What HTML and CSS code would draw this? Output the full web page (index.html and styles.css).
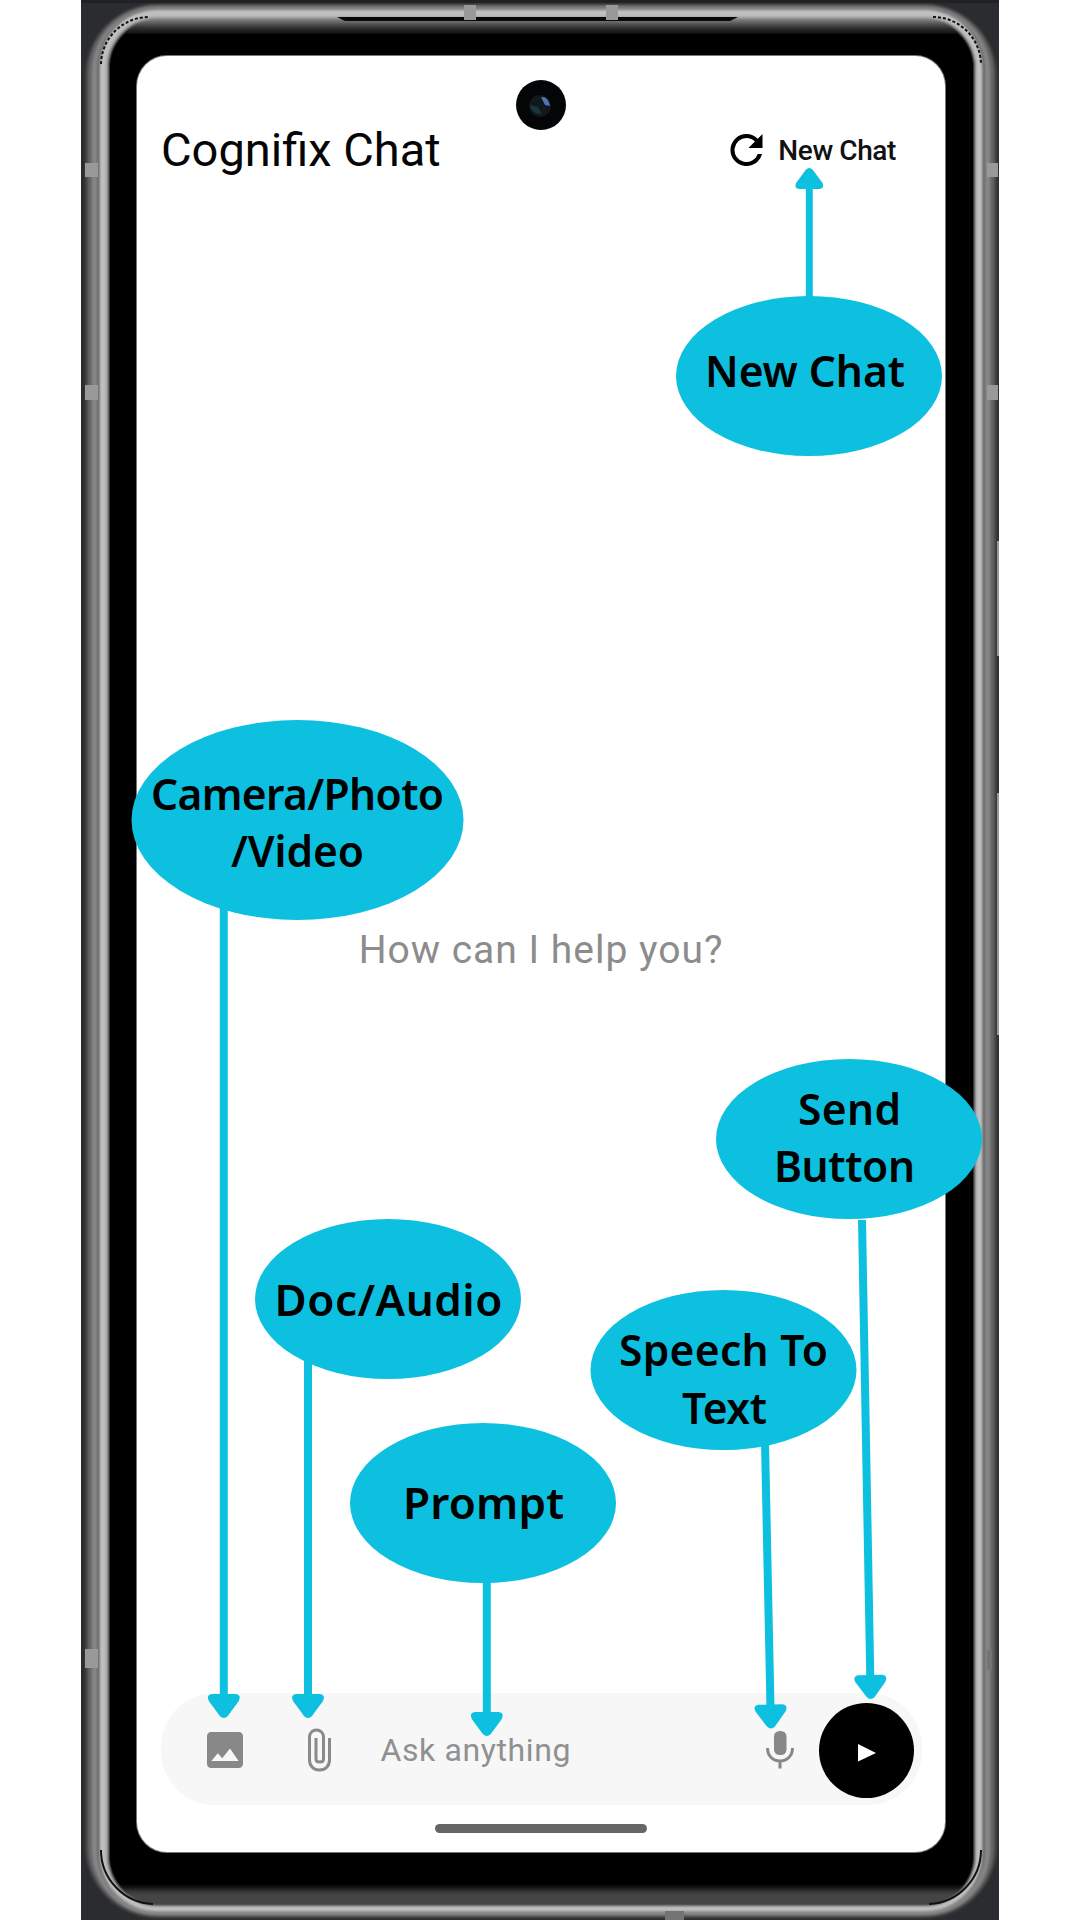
FILE: index.html
```html
<!DOCTYPE html>
<html lang="en">
<head>
<meta charset="utf-8">
<title>Cognifix Chat</title>
<link rel="stylesheet" href="styles.css">
</head>
<body>
<main class="stage">
  <svg class="frame" viewBox="0 0 918 1920" aria-hidden="true">
    <defs>
      <filter id="soft" x="-2%" y="-2%" width="104%" height="104%"><feGaussianBlur stdDeviation=".8"/></filter>
      <linearGradient id="inner" x1="0" y1="18" x2="0" y2="1907" gradientUnits="userSpaceOnUse">
        <stop offset="0" stop-color="#8c8c8c"/><stop offset=".004" stop-color="#444"/><stop offset=".009" stop-color="#000"/>
        <stop offset=".988" stop-color="#000"/><stop offset=".993" stop-color="#444"/><stop offset="1" stop-color="#444"/>
      </linearGradient>
    </defs>
    <rect width="918" height="1920" fill="#2b2c30"/>
    <rect width="918" height="3" fill="#202124"/>
    <g filter="url(#soft)">
      <rect x="4" y="4" width="912" height="1914" rx="72" fill="#444"/>
      <rect x="7" y="5" width="906" height="1911" rx="69" fill="#666"/>
      <rect x="11" y="7" width="898" height="1908" rx="65" fill="#868686"/>
      <rect x="16" y="9" width="888" height="1902" rx="60" fill="#686868"/>
      <rect x="19" y="10" width="882" height="1901" rx="57" fill="#c0c0c0"/>
      <rect x="24" y="16" width="872" height="1891" rx="53" fill="#aaa"/>
      <rect x="27" y="18" width="867" height="1888" rx="50" fill="url(#inner)"/>
    </g>
    <path d="M20 64A48 48 0 0 1 68 17M852 17A48 48 0 0 1 900 64" fill="none" stroke="#111" stroke-width="2" stroke-dasharray="3 2"/>
    <path d="M20 1850A54 54 0 0 0 72 1904M848 1904A54 54 0 0 0 900 1850" fill="none" stroke="#111" stroke-width="2"/>
    <path d="M256 17H657L649 21H264Z" fill="#080808"/>
    <g fill="#999">
      <path d="M383 5h12v15h-12zM525 5h12v15h-12z"/>
      <path d="M4 163h13v14H4zM4 385h13v15H4zM4 1649h13v19H4z"/>
      <path d="M906 163h11v14h-11zM906 385h11v15h-11z"/>
      <path d="M916 541h2v115h-2zM916 793h2v242h-2z"/>
    </g>
    <path d="M906 1650h5v20h-5zM584 1911h19v9h-19z" fill="#737373"/>
  </svg>

  <section class="screen">
    <div class="camera">
      <svg viewBox="0 0 50 50" width="50" height="50"><circle cx="25" cy="25" r="25" fill="#040506"/><circle cx="24" cy="26" r="11" fill="#10171d"/><path d="M14 25Q16 35 26 34L22 27Z" fill="#163838"/><path d="M25 17Q32 16 34 26L29 25Z" fill="#5273b4"/></svg>
    </div>
    <header class="topbar">
      <h1 class="title">Cognifix Chat</h1>
      <button class="new-chat">
        <svg class="refresh" viewBox="4 4 16 16" width="33" height="32"><path d="M17.65 6.35A7.96 7.96 0 0 0 12 4a8 8 0 1 0 7.73 10h-2.08A6 6 0 1 1 12 6c1.66 0 3.14.69 4.22 1.78L13 11h7V4z"/></svg>
        <span class="new-label">New Chat</span>
      </button>
    </header>
    <div class="welcome"><p class="greeting">How can I help you?</p></div>
    <div class="composer">
      <svg class="image-icon" viewBox="3 3 18 18" width="36" height="36"><path d="M21 19V5c0-1.100-.9-2-2-2H5c-1.100 0-2 .9-2 2v14c0 1.100.9 2 2 2h14c1.100 0 2-.9 2-2zM5.200 17.500l3.200-3.900 2.200 2.500 3.900-4.900 4.300 6.300z"/></svg>
      <svg class="clip-icon" viewBox="0 0 24 44" width="24" height="44"><path d="M22.500 10v22c0 6-4 10-10 10s-10-4-10-10V9c0-4 3-7 7-7s7 3 7 7v22c0 2-1.500 3-3.800 3S9 33 9 31V10"/></svg>
      <span class="placeholder">Ask anything</span>
      <svg class="mic-icon" viewBox="0 0 28 39" width="28" height="39"><rect x="8" y="1" width="12.500" height="24" rx="5.500" fill="#888"/><path d="M1.500 18c0 8 5.500 13 12.500 13s12.500-5 12.500-13M14 31v7.500" fill="none" stroke="#888" stroke-width="3"/></svg>
      <button class="send" aria-label="Send"><svg viewBox="0 0 18 18" width="18" height="18"><path d="M0 0v17.500L18 9z" fill="#fff"/></svg></button>
    </div>
    <div class="home-bar"></div>
  </section>

  <svg class="callouts" viewBox="0 0 1080 1920">
    <defs>
      <path id="head" d="M-12-24H12Q18-23 15-17L4-2Q0 2-4-2L-15-17Q-18-23-12-24Z"/>
    </defs>
    <g class="shape">
      <ellipse cx="809" cy="376" rx="133" ry="80"/>
      <ellipse cx="297.500" cy="820" rx="166" ry="100"/>
      <ellipse cx="849" cy="1139" rx="133" ry="80"/>
      <ellipse cx="388" cy="1299" rx="133" ry="80"/>
      <ellipse cx="723.500" cy="1370" rx="133" ry="80"/>
      <ellipse cx="483" cy="1503" rx="133" ry="80"/>
      <use href="#head" transform="translate(809.300 168) rotate(180) scale(.87)"/>
      <use href="#head" x="223.800" y="1718"/>
      <use href="#head" x="308" y="1718"/>
      <use href="#head" x="486.800" y="1736"/>
      <use href="#head" transform="translate(771 1728.500) rotate(-1.300)"/>
      <use href="#head" transform="translate(870.700 1699) rotate(-1)"/>
    </g>
    <g class="line">
      <path d="M809.300 188V298" stroke-width="7"/>
      <path d="M223.800 905V1698"/>
      <path d="M308 1355V1698"/>
      <path d="M486.800 1580V1716"/>
      <path d="M765 1443L770.500 1708"/>
      <path d="M862 1220L870.300 1678"/>
    </g>
    <g class="label">
      <text x="705" y="387" textLength="200">New Chat</text>
      <text x="151" y="810" textLength="293">Camera/Photo</text>
      <text x="231" y="867" textLength="133">/Video</text>
      <text x="798" y="1125" textLength="103">Send</text>
      <text x="774" y="1182" textLength="141">Button</text>
      <text class="large" x="274.500" y="1316" textLength="228">Doc/Audio</text>
      <text x="619" y="1366" textLength="209">Speech To</text>
      <text x="682" y="1424" textLength="85">Text</text>
      <text class="large" x="403" y="1519" textLength="161">Prompt</text>
    </g>
  </svg>
</main>
</body>
</html>
```
FILE: styles.css
```css
* { box-sizing: border-box; }
body { margin: 0; background: #fff; font-family: Roboto, sans-serif; }
button { border: 0; background: none; padding: 0; font: inherit; }
svg { display: block; flex: none; }
.stage { position: relative; width: 1080px; height: 1920px; overflow: hidden; padding: 56px 135px 68px 137px; }
.frame { position: absolute; left: 81px; top: 0; width: 918px; height: 1920px; }
.screen { position: relative; width: 808px; height: 1796px; background: #fff; border-radius: 30px; box-shadow: 0 0 0 1px #777; display: flex; flex-direction: column; align-items: center; padding: 24px 23px 0; }
.camera { height: 50px; }
.topbar { width: 100%; height: 62px; display: flex; align-items: center; justify-content: space-between; margin-top: -16px; padding: 10px 26px 0 1px; }
.title { margin: 0; font-size: 47px; font-weight: 400; line-height: 50px; color: #050505; white-space: nowrap; }
.new-chat { display: flex; align-items: center; gap: 15px; color: #111; }
.refresh { fill: #000; }
.new-label { font-size: 28px; font-weight: 500; letter-spacing: -.4px; white-space: nowrap; }
.welcome { flex: 1; display: flex; align-items: center; justify-content: center; padding-top: 31px; }
.greeting { margin: 0; font-size: 39px; letter-spacing: 1px; color: #8c8c8c; white-space: nowrap; }
.composer { width: 761px; height: 112px; border-radius: 54px; background: #f7f7f7; display: flex; align-items: center; padding: 0 8px 0 46px; }
.image-icon { fill: #888; margin-top: 1px; }
.clip-icon { fill: none; stroke: #8a8a8a; stroke-width: 3; margin-left: 64px; margin-top: 1px; }
.placeholder { flex: 1; margin-left: 50px; padding-top: 2px; font-size: 32px; letter-spacing: .6px; color: #909090; white-space: nowrap; }
.mic-icon { margin-right: 25px; }
.send { width: 95px; height: 95px; border-radius: 50%; background: #000; display: flex; align-items: center; justify-content: center; padding: 4px 0 0 2px; margin-top: 3px; }
.home-bar { width: 212px; height: 9px; border-radius: 5px; background: #666; margin: 19px 0 19px; flex: none; }
.callouts { position: absolute; left: 0; top: 0; width: 1080px; height: 1920px; }
.shape { fill: #0dc0e0; }
.line { fill: none; stroke: #0dc0e0; stroke-width: 8; }
.label { font-family: "Noto Sans", sans-serif; font-size: 42.500px; font-weight: 600; fill: #000; }
.large { font-size: 44px; }
```
